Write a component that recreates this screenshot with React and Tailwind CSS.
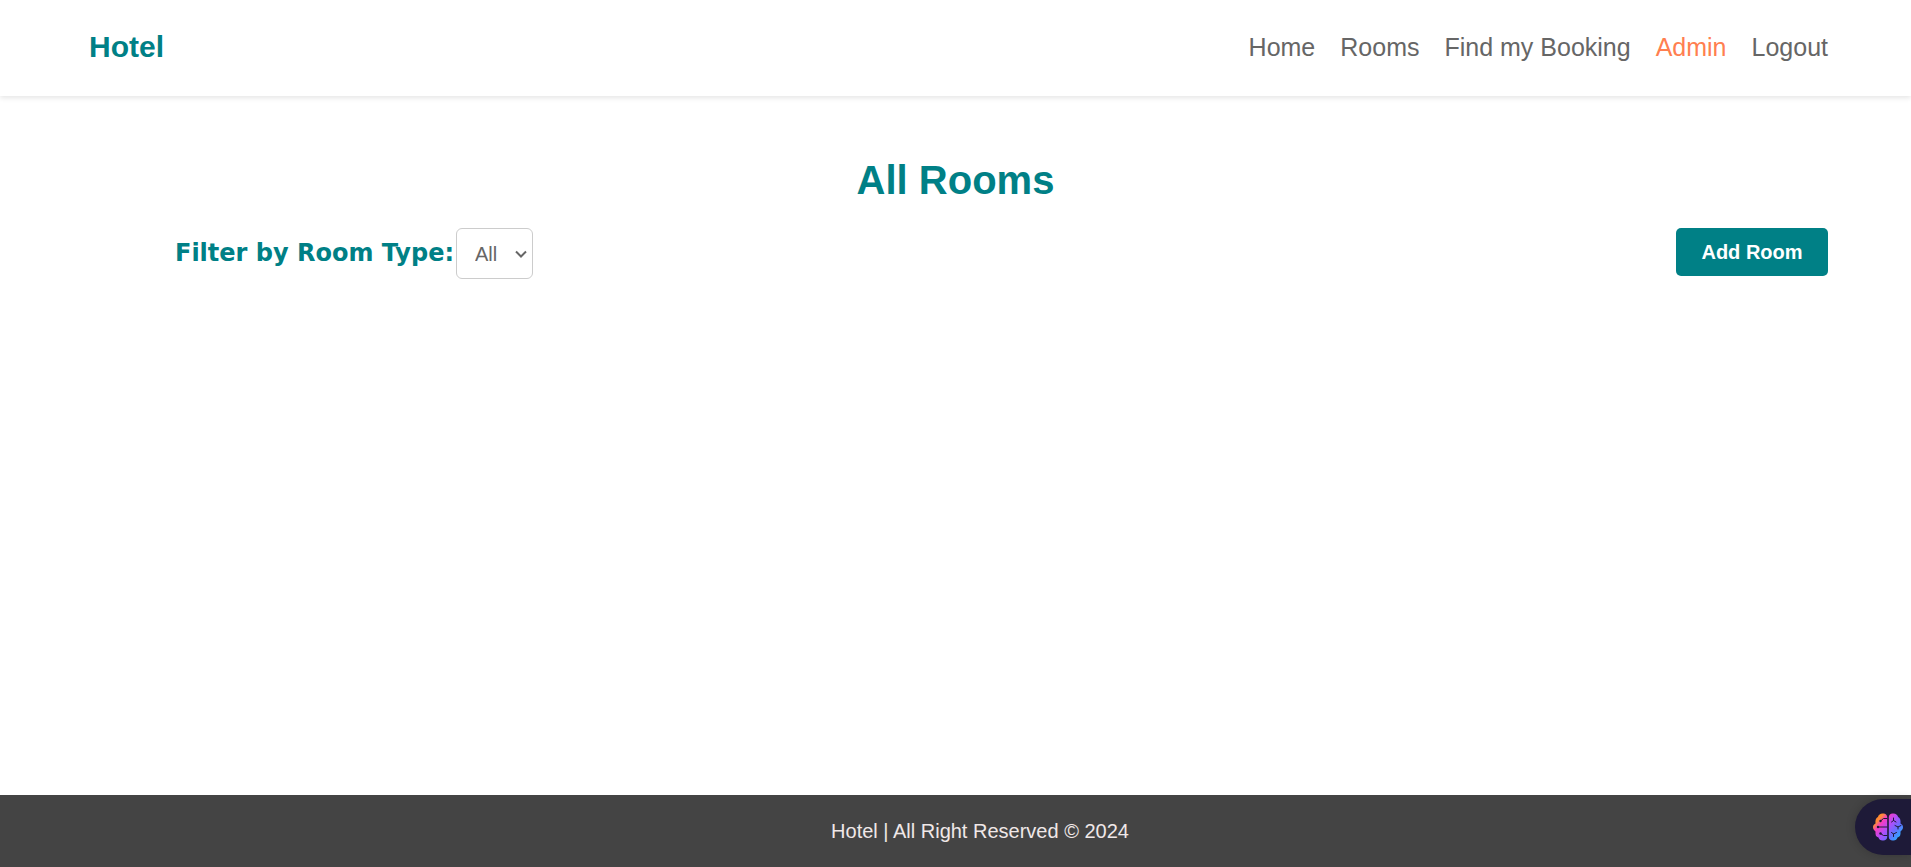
const links = ["Home", "Rooms", "Find my Booking", "Admin", "Logout"];

function BrainIcon() {
  return (
    <svg viewBox="0 0 30 28" className="h-7 w-[30px]" aria-hidden="true">
      <defs>
        <linearGradient id="brain" gradientUnits="userSpaceOnUse" x1="3" y1="3" x2="27" y2="23">
          <stop offset="0" stopColor="#ff8a1e" />
          <stop offset="0.14" stopColor="#ff8a3c" />
          <stop offset="0.28" stopColor="#f43cc4" />
          <stop offset="0.52" stopColor="#b24dfa" />
          <stop offset="0.75" stopColor="#6a6cff" />
          <stop offset="1" stopColor="#2fa8ff" />
        </linearGradient>
      </defs>
      <path
        fill="url(#brain)"
        d="M9.5.5C12 0 14.2 1.6 14.2 4v20c0 2.400-2.200 4-4.700 3.500-2 0-3.500-1.300-4-3C3 24 2.200 22 2.500 18.500 1 17.300 0 16 0 14.300 0 12.500.9 11.500 2.500 10.500c-.300-3 .200-5.500 2.400-6.500C5.500 1.700 7.300.5 9.500.5Z M20.500.5C18 0 15.800 1.600 15.800 4v20c0 2.400 2.200 4 4.700 3.500 2 0 3.500-1.300 4-3 2.500-.500 3.300-2.500 3-6 1.500-1.200 2.500-2.500 2.500-4.200 0-1.800-.900-2.800-2.500-3.800.300-3-.200-5.500-2.400-6.500C24.500 1.700 22.700.5 20.500.5Z"
      />
      <g fill="none" stroke="#1e1a38" strokeWidth="1" strokeLinecap="round">
        <path d="M14 5.500h-3.500L7.500 8M14 14H5M14 22.500h-3.500L7.500 20.500M20.500 5v2.500L18.500 9M20.500 7.500 23 9M22 12.500l3 1.500 3-1.500M25 14v2M18.500 19.500l2 1.500 3-1.500M20.500 21v2.500" />
      </g>
      <g fill="#1e1a38">
        <circle cx="7.500" cy="8" r="1.200" />
        <circle cx="5" cy="14" r="1.200" />
        <circle cx="7.500" cy="20.500" r="1.200" />
      </g>
    </svg>
  );
}

export default function App() {
  return (
    <div className="flex min-h-screen flex-col bg-white font-['Liberation_Sans',Arial,sans-serif] text-[#666]">
      <header className="flex h-24 items-center justify-between pr-[83px] pl-[89px] shadow-[0_2px_5px_rgba(0,0,0,0.1)]">
        <a href="#" className="pb-1 text-[30px] font-bold text-[#008086]">Hotel</a>
        <nav className="flex gap-[25px] text-[25px]">
          {links.map((label) => (
            <a key={label} href="#" className={label === "Admin" ? "text-[#ff7f50]" : "text-[#666]"}>
              {label}
            </a>
          ))}
        </nav>
      </header>

      <main className="grow px-[83px] pt-[60px]">
        <h1 className="text-center text-[40px] leading-[48px] font-bold text-[#008086]">All Rooms</h1>
        <div className="mt-6 flex items-start justify-between pl-[92px]">
          <div className="flex items-center gap-0.5">
            <label htmlFor="room-type" className="pb-0.5 font-['DejaVu_Sans',Verdana,sans-serif] text-[24px] leading-[36px] font-bold text-[#008086]">
              Filter by Room Type:
            </label>
            <div className="relative">
              <select
                id="room-type"
                className="block h-[51px] w-[77px] appearance-none rounded-md border border-[#ccc] bg-white pl-[18px] text-[20px] text-[#666]"
              >
                <option>All</option>
              </select>
              <svg
                viewBox="0 0 12 8"
                className="pointer-events-none absolute top-[22px] right-[6px] h-2 w-3"
                fill="none"
                stroke="#666"
                strokeWidth="2"
                aria-hidden="true"
              >
                <path d="M1 1.500 6 6.500 11 1.500" />
              </svg>
            </div>
          </div>
          <button type="button" className="h-12 w-[152px] rounded-[5px] bg-[#008086] text-[20px] font-bold text-white">
            Add Room
          </button>
        </div>
      </main>

      <footer className="flex h-[72px] items-center justify-center bg-[#444] pl-[49px] text-[20px] text-[#f0e8e8]">
        <p>Hotel | All Right Reserved © 2024</p>
      </footer>

      <button
        type="button"
        aria-label="Open assistant"
        className="fixed right-0 bottom-3 flex h-14 w-14 items-center rounded-l-full bg-[#1e1a38] pl-[18px] shadow-[0_0_10px_rgba(0,0,0,0.2)]"
      >
        <BrainIcon />
      </button>
    </div>
  );
}
